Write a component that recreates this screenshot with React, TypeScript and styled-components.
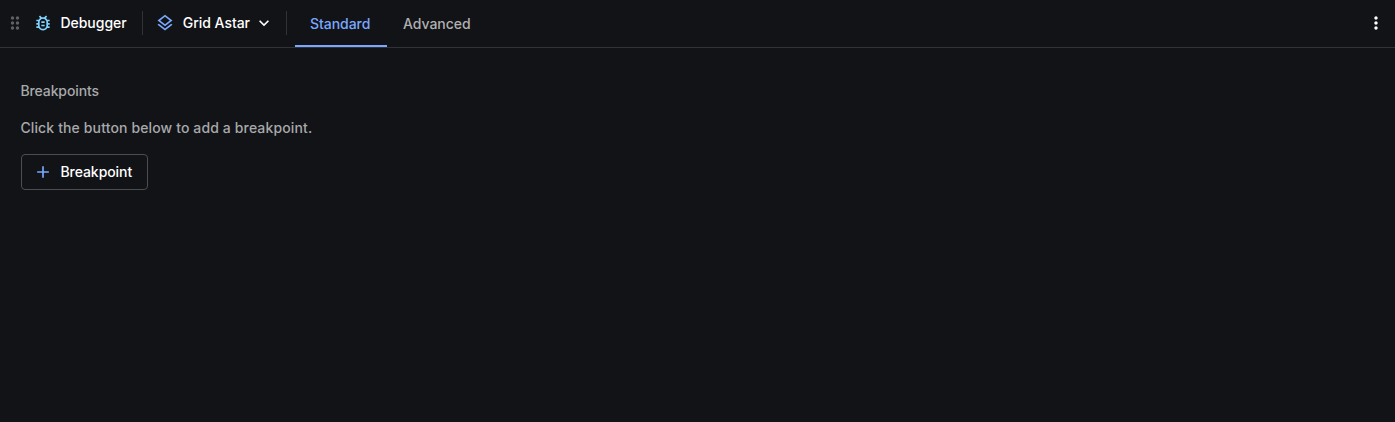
import React from "react";
import styled, { createGlobalStyle } from "styled-components";
import {
  MdAdd,
  MdDragIndicator,
  MdExpandMore,
  MdMoreVert,
  MdOutlineBugReport,
  MdOutlineLayers,
} from "react-icons/md";

const GlobalStyle = createGlobalStyle`
  * { box-sizing: border-box; }
  body {
    margin: 0;
    background: #121317;
    color: #fff;
    font-family: Inter, "Liberation Sans", sans-serif;
    font-size: 14px;
    font-weight: 500;
    line-height: 20px;
    letter-spacing: -0.07px;
  }
  button {
    font: inherit;
    color: inherit;
    letter-spacing: inherit;
    background: none;
    border: 0;
    padding: 0;
  }
  svg { display: block; flex: none; }
`;

const Panel = styled.div`
  display: flex;
  flex-direction: column;
  height: 100vh;
  overflow: hidden;
`;

const Toolbar = styled.header`
  display: flex;
  height: 48px;
  padding: 0 9px 0 5px;
  border-bottom: 1px solid #313236;
  font-weight: 450;
  letter-spacing: -0.04px;
`;

const Title = styled.div`
  display: flex;
  align-items: center;
  width: 121px;
  height: 46px;
`;

const IconSlot = styled.span<{ $color: string; $gap?: number }>`
  display: flex;
  color: ${(p) => p.$color};
  margin-right: ${(p) => p.$gap ?? 8}px;
`;

const Divider = styled.span<{ $before: number; $after: number }>`
  width: 1px;
  height: 24px;
  margin: 11px ${(p) => p.$after}px 0 ${(p) => p.$before}px;
  background: #313236;
`;

const LayerSelect = styled.button`
  display: flex;
  align-items: center;
  width: 119px;
  height: 46px;
`;

const Chevron = styled(MdExpandMore)`
  margin-left: auto;
`;

const Tabs = styled.nav`
  display: flex;
`;

const Tab = styled.button<{ $active?: boolean }>`
  height: 47px;
  padding: 2px 15px 0;
  min-width: 92px;
  text-align: left;
  color: ${(p) => (p.$active ? "#7aa8ff" : "#b0b0b2")};
  border-bottom: 2px solid ${(p) => (p.$active ? "#7aa8ff" : "transparent")};

  & + & {
    padding-left: 16px;
  }
`;

const MenuButton = styled.button`
  display: flex;
  align-items: center;
  height: 46px;
  margin-left: auto;
`;

const Content = styled.main`
  display: flex;
  flex-direction: column;
  align-items: flex-start;
  padding: 33px 20px 0;
`;

const Message = styled.p<{ $top: number; $spacing?: number }>`
  margin: ${(p) => p.$top}px 0 0 0.4px;
  color: #a8a9ab;
  letter-spacing: ${(p) => p.$spacing ?? 0}px;
`;

const AddButton = styled.button`
  display: flex;
  align-items: center;
  height: 36px;
  width: 127px;
  margin: 16px 0 0 1px;
  padding-left: 11px;
  border: 1px solid #4c4d50;
  border-radius: 4px;
`;

export default function App() {
  return (
    <>
      <GlobalStyle />
      <Panel>
        <Toolbar>
          <Title>
            <IconSlot $color="#5f6063"><MdDragIndicator size={20} /></IconSlot>
            <IconSlot $color="#7fd4ff" $gap={7.5}><MdOutlineBugReport size={20} /></IconSlot>
            Debugger
          </Title>
          <Divider $before={16} $after={12} />
          <LayerSelect>
            <IconSlot $color="#7aa8ff" $gap={7.8}><MdOutlineLayers size={20} /></IconSlot>
            Grid Astar
            <Chevron size={20} />
          </LayerSelect>
          <Divider $before={12} $after={8} />
          <Tabs>
            <Tab $active>Standard</Tab>
            <Tab>Advanced</Tab>
          </Tabs>
          <MenuButton aria-label="More"><MdMoreVert size={20} /></MenuButton>
        </Toolbar>
        <Content>
          <Message $top={0} $spacing={-0.1}>Breakpoints</Message>
          <Message $top={17} $spacing={0.13}>Click the button below to add a breakpoint.</Message>
          <AddButton>
            <IconSlot $color="#7aa8ff" $gap={7.5}><MdAdd size={20} /></IconSlot>
            Breakpoint
          </AddButton>
        </Content>
      </Panel>
    </>
  );
}
